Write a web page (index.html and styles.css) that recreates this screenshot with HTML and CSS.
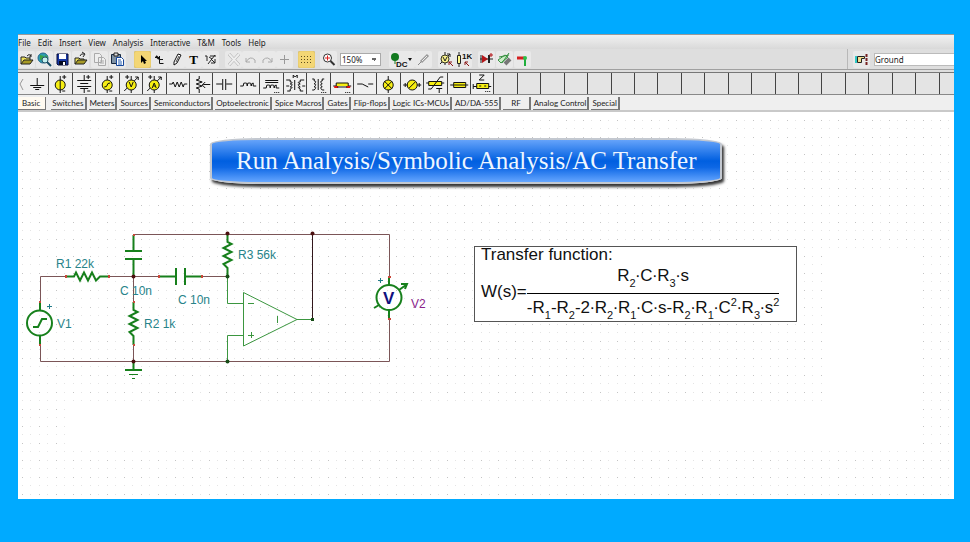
FILE: index.html
```html
<!DOCTYPE html>
<html lang="en">
<head>
<meta charset="utf-8">
<title>Schematic Editor</title>
<link rel="stylesheet" href="styles.css">
</head>
<body>
<main class="app">
  <nav class="menu" aria-label="Main menu">
    <button>File</button><button>Edit</button><button>Insert</button><button>View</button><button>Analysis</button><button>Interactive</button><button>T&amp;M</button><button>Tools</button><button>Help</button>
  </nav>

  <div class="toolbar">
    <div class="group spaced">
      <button class="tool" aria-label="Open"><svg viewBox="0 0 17 17"><path d="M3 13V6h4l1 1h4v2" fill="#eee35c" stroke="#222"/><path d="M3 13l3-4h9l-3 4z" fill="#a79a25" stroke="#222"/><path d="M9 5q2-3 4 0M13 3v3h-2" fill="none" stroke="#222"/></svg></button>
      <button class="tool" aria-label="Open from web"><svg viewBox="0 0 17 17"><circle cx="7" cy="7" r="5" fill="#2d9fae" stroke="#23668e"/><path d="M4 4l4 1-1 3-3 1zM9 4l3 2-2 3z" fill="#39a343"/><circle cx="9" cy="9" r="3" fill="#c3f0ed" stroke="#27556b"/><path d="M11 11l4 4" stroke="#174d65" stroke-width="2"/></svg></button>
      <button class="tool" aria-label="Save"><svg viewBox="0 0 17 17"><path d="M3 3h11v11H4l-1-1z" fill="#1737a4" stroke="#080d39"/><path d="M5 3h7v5H5z" fill="#fff"/><path d="M5 10h7v4H5z" fill="#050a22"/><path d="M9 11h2v3H9z" fill="#fff"/></svg></button>
      <button class="tool" aria-label="Close file"><svg viewBox="0 0 17 17"><path d="M3 13V7h4l1 1h4v2" fill="#eee35c" stroke="#222"/><path d="M3 13l3-4h9l-3 4z" fill="#a79a25" stroke="#222"/><path d="M8 5q1-3 4-2M10 1l3 2-2 3" fill="none" stroke="#222"/></svg></button>
    </div>
    <div class="group spaced">
      <button class="tool" aria-label="Copy"><svg viewBox="0 0 17 17" fill="#eee" stroke="#aaa"><path d="M3.500 2.500h5l2 2v7h-7zM7.500 6.500h5l2 2v6h-7z"/><path d="M9 10h4M9 12h4"/></svg></button>
      <button class="tool" aria-label="Paste"><svg viewBox="0 0 17 17"><path d="M2.500 3.500h9v9h-9z" fill="#7e91a4" stroke="#17283e"/><path d="M5 2h4v3H5z" fill="#ddd" stroke="#222"/><path d="M7.500 6.500h5l2 2v6h-7z" fill="#fff" stroke="#16469a"/><path d="M9 9h3M9 11h4M9 13h4" stroke="#245eb1"/></svg></button>
    </div>
    <div class="group wide">
      <button class="tool active" aria-label="Select"><svg viewBox="0 0 17 17"><path d="M7 4v8l2-2 1 3 2-1-1-2h2z" fill="#000"/></svg></button>
      <button class="tool" aria-label="Wire"><svg viewBox="0 0 17 17" fill="none" stroke="#111"><path d="M4 6.500h4M8.500 5v7.500h4M9 8.500h3"/><path d="M5 5l3 3" stroke-width="2"/></svg></button>
      <button class="tool" aria-label="Draw"><svg viewBox="0 0 17 17"><path d="M6 11l4-8 3 1-4 8-3 2z" fill="#fff" stroke="#111"/><path d="M8 11l3-6" stroke="#444"/></svg></button>
      <button class="tool letter" aria-label="Text">T</button>
      <button class="tool" aria-label="Split wire"><svg viewBox="0 0 17 17" fill="none" stroke="#222"><path d="M3 5h2v5M6 13l7-9M8 5h6M9 8l4 4M9 12h4V8M7 6l3 2"/></svg></button>
    </div>
    <div class="group mid">
      <button class="tool" aria-label="Delete"><svg viewBox="0 0 17 17"><path d="M4 3l10 11M14 3L4 14" stroke="#aaa" stroke-width="3"/><path d="M4 3l10 11M14 3L4 14" stroke="#eee" stroke-width="2"/></svg></button>
      <button class="tool" aria-label="Undo"><svg viewBox="0 0 17 17" fill="none" stroke="#aaa"><path d="M4 7v4h4M4 11q4-7 9-2v3"/></svg></button>
      <button class="tool" aria-label="Redo"><svg viewBox="0 0 17 17" fill="none" stroke="#aaa"><path d="M13 7v4H9M13 11Q9 4 4 9v3"/></svg></button>
      <button class="tool" aria-label="Add point"><svg viewBox="0 0 17 17" stroke="#999"><path d="M4 8.500h9M8.500 4v9"/></svg></button>
    </div>
    <div class="group tight">
      <button class="tool active" aria-label="Grid"><svg viewBox="0 0 17 17"><path d="M3 5.500h11M3 8.500h11M3 11.500h11" stroke="#5d4d1c" stroke-dasharray="1 2"/></svg></button>
    </div>
    <div class="group tight">
      <button class="tool" aria-label="Zoom"><svg viewBox="0 0 17 17"><circle cx="7.500" cy="7" r="4" fill="#fff" stroke="#333"/><path d="M5 7h5M7.500 4.500v5" stroke="#d22"/><path d="M10.500 10l4 4" stroke="#333" stroke-width="2"/></svg></button>
    </div>
    <select class="zoom" aria-label="Zoom level"><option>150%</option></select>
    <div class="group wide">
      <button class="tool dc" aria-label="DC analysis"><svg viewBox="0 0 26 17"><circle cx="6" cy="6" r="4" fill="#127a20"/><path d="M6 9v4" stroke="#127a20"/><text x="7" y="16" class="icon-text">DC</text><path d="M19 7h4l-2 3z" fill="#111"/></svg></button>
      <button class="tool" aria-label="Probe"><svg viewBox="0 0 17 17"><path d="M3 14l3-3" stroke="#888"/><path d="M6 11l7-7" stroke="#999" stroke-width="3"/><path d="M7 10l5-5" stroke="#eee"/></svg></button>
    </div>
    <div class="group mid">
      <button class="tool" aria-label="Add meter"><svg viewBox="0 0 17 17"><path d="M7 1v13M2 13L12 3M12 3H9M12 3v3" stroke="#222" fill="none"/><circle cx="7" cy="8" r="4" fill="#f8f18c" stroke="#332"/><path d="M5 6l2 4 2-4" stroke="#222" fill="none"/><path d="M15 15l-4-4M11 14v-3h3" stroke="#8b1717" fill="none"/></svg></button>
      <button class="tool" aria-label="Set value"><svg viewBox="0 0 17 17"><path d="M4 1v15" stroke="#222"/><path d="M2.500 4.500h3v8h-3z" fill="#fffb8a" stroke="#222"/><text x="7" y="8" class="icon-text">1K</text><path d="M14 15l-4-4M10 14v-3h3" stroke="#8b1717" fill="none"/></svg></button>
    </div>
    <div class="group spaced mid">
      <button class="tool" aria-label="Diode"><svg viewBox="0 0 17 17"><path d="M2 8h13M3 4v8" stroke="#222"/><path d="M4 4l6 4-6 4z" fill="#b51518"/><path d="M11 4v8" stroke="#222" stroke-width="2"/><path d="M13 2v4M11 4h4" stroke="#b51518"/></svg></button>
      <button class="tool" aria-label="Circuit board"><svg viewBox="0 0 17 17"><path d="M2 9l7-5 3 2-7 6zM3 6l10-2M6 12l7-10" fill="#cceec9" stroke="#399142"/><path d="M9 13l5-5" stroke="#777" stroke-width="4"/></svg></button>
      <button class="tool" aria-label="Join nodes"><svg viewBox="0 0 17 17"><path d="M3 7h7" stroke="#d52020" stroke-width="3"/><path d="M11 7v8" stroke="#20af3d" stroke-width="2"/><circle cx="11" cy="7" r="2" fill="#2ac04a"/></svg></button>
    </div>
    <div class="finder">
      <button class="tool" aria-label="Find component"><svg viewBox="0 0 17 17"><path d="M2 5h2v7H2z" fill="#30c8c6"/><path d="M4.500 5.500h7v2h-3v4h-4z" fill="#f3de8e" stroke="#222"/><path d="M13.500 3v3M13.500 7v3M13.500 11v3" stroke="#722" stroke-width="2"/></svg></button>
      <input type="text" value="Ground" aria-label="Component">
    </div>
  </div>

  <div class="palette">
    <button class="scroll" aria-label="Scroll left"><svg viewBox="0 0 8 20"><path d="M5 5L2 10l3 6" fill="none" stroke="#999"/></svg></button>
    <button aria-label="Ground"><svg viewBox="0 0 22 20"><path d="M11 4v7M4 11.500h14M7 13.500h8M9 15.500h4"/></svg></button>
    <button aria-label="Voltage source"><svg viewBox="0 0 22 20"><circle cx="11" cy="11" r="5" class="y"/><path d="M11 2v17M13 3h4M15 1v4M13 17h3"/></svg></button>
    <button aria-label="Battery"><svg viewBox="0 0 22 20"><path d="M11 1v5M4 6.500h14M7 9.500h8M4 12.500h14M7 14.500h8M11 15v4M13 3h4M15 1v4M14 17h3"/></svg></button>
    <button aria-label="Generator"><svg viewBox="0 0 22 20"><circle cx="11" cy="11" r="5" class="y"/><path d="M11 2v4M11 16v3M8 13q3 0 3-2t3-2M13 3h4M15 1v4M13 17h3"/></svg></button>
    <button aria-label="Voltmeter"><svg viewBox="0 0 22 20"><path d="M11 2v17M4 17L18 3M15 3h3v3M5 3h4M7 1v4"/><circle cx="11" cy="11" r="5" class="y"/><path d="M9 8l2 5 2-5"/></svg></button>
    <button aria-label="Ammeter"><svg viewBox="0 0 22 20"><path d="M11 2v17M4 17L18 3M15 3h3v3M5 3h4M7 1v4"/><circle cx="11" cy="11" r="5" class="y"/><path d="M9 14l2-5 2 5M10 12h2"/></svg></button>
    <button aria-label="Resistor"><svg viewBox="0 0 22 20"><path d="M2 10h3l1-2 2 5 2-5 2 5 2-5 2 5 1-3h3"/></svg></button>
    <button aria-label="Potentiometer"><svg viewBox="0 0 22 20"><path d="M9 2v3l-3 1 6 2-6 2 6 2-6 2 3 1v4M13 10.500h7M15 8l-3 3 3 3"/></svg></button>
    <button aria-label="Capacitor"><svg viewBox="0 0 22 20"><path d="M3 10h6M13 10h6M9.500 5v11M12.500 5v11"/></svg></button>
    <button aria-label="Inductor"><svg viewBox="0 0 22 20"><path d="M3 12h3q0-4 2-3 2-1 2 3 0-4 2-3 2-1 2 3 0-3 2-3v3h3"/></svg></button>
    <button aria-label="Iron core inductor"><svg viewBox="0 0 22 20"><path d="M5 6.500h13M5 8.500h13M3 14h3q0-4 2-3 2-1 2 3 0-4 2-3 2-1 2 3 0-3 2-3v3h3"/><path d="M14 18.500h6" stroke-dasharray="1 1"/></svg></button>
    <button aria-label="Coupled inductors"><svg viewBox="0 0 22 20"><path d="M2 6h4v2q4 0 0 2 4 0 0 3 4 0 0 2v2H3M20 6h-4v2q-4 0 0 2-4 0 0 3-4 0 0 2v2h3M10.500 6v10M9 4V1l2 2 2-2v3M2 12h3M18 12h3"/></svg></button>
    <button aria-label="Transformer"><svg viewBox="0 0 22 20"><path d="M5 5h2v2q3 0 0 3 3 0 0 3 3 0 0 3H5M17 5h-2v2q-3 0 0 3-3 0 0 3-3 0 0 3h2M11 5v11"/><path d="M14 18.500h6" stroke-dasharray="1 1"/></svg></button>
    <button aria-label="Fuse"><svg viewBox="0 0 22 20"><path d="M2 12h3v-3h12v3h3" class="y"/><path d="M3 13h4M15 13h4" stroke="#d11" stroke-width="2"/><path d="M6 13h10"/><path d="M14 18.500h6" stroke-dasharray="1 1"/></svg></button>
    <button aria-label="Switch"><svg viewBox="0 0 22 20"><path d="M3 10h5l6 3M14 10h5"/></svg></button>
    <button aria-label="Lamp"><svg viewBox="0 0 22 20"><path d="M11 2v17"/><circle cx="11" cy="11" r="5" class="y"/><path d="M7 7l8 8M15 7l-8 8"/></svg></button>
    <button aria-label="Motor"><svg viewBox="0 0 22 20"><path d="M2 11h18M4 9v4M18 9v4"/><circle cx="11" cy="11" r="5" class="y"/><path d="M8 14l6-6"/></svg></button>
    <button aria-label="Thermistor"><svg viewBox="0 0 22 20"><path d="M2 9h18"/><path d="M4.500 7.500h13v4h-13z" class="y"/><path d="M4 15h3L16 3h3M12 14.500h6M15 14v5"/></svg></button>
    <button aria-label="Resistor box"><svg viewBox="0 0 22 20"><path d="M2 11h18"/><path d="M5.500 8.500h12v5h-12z" class="y"/><path d="M6 11h11"/></svg></button>
    <button aria-label="Complex impedance"><svg viewBox="0 0 22 20"><path d="M2 12.500h18M8 1h5L8 6h5M2 10v5"/><path d="M5.500 9.500h12v5h-12z" class="y"/><path d="M8 12h2M13 12h2"/><path d="M14 17.500h6" stroke-dasharray="1 1"/></svg></button>
    <i></i><i></i><i></i><i></i><i></i><i></i><i></i><i></i><i></i><i></i><i></i><i></i><i></i><i></i><i></i><i></i><i></i><i></i><i></i><i></i>
  </div>

  <div class="tabs" role="tablist">
    <button role="tab" aria-selected="true" class="current">Basic</button><button role="tab">Switches</button><button role="tab">Meters</button><button role="tab">Sources</button><button role="tab">Semiconductors</button><button role="tab">Optoelectronic</button><button role="tab">Spice Macros</button><button role="tab">Gates</button><button role="tab">Flip-flops</button><button role="tab">Logic ICs-MCUs</button><button role="tab">AD/DA-555</button><button role="tab" class="short">RF</button><button role="tab">Analog Control</button><button role="tab">Special</button>
  </div>

  <section class="sheet">
    <h1 class="banner">Run Analysis/Symbolic Analysis/AC Transfer</h1>
    <div class="work">
      <svg class="schematic" viewBox="18 226 432 160" role="img" aria-label="Bridged-T active filter circuit">
        <g class="wire">
          <path d="M134 234.500H389.500V277M389.500 319V361.500H40.500V345M40.500 302V276.500H66M109 276.500H160M202 276.500H227M133.500 276V302M133.500 345V361"/>
          <path d="M312.500 234V319" class="dark"/>
        </g>
        <g class="part">
          <path d="M133.500 235V251M125 251H142M125 259H142M133.500 259V276"/>
          <path d="M66 276.500h8l2-4 4 8 4-8 4 8 4-8 4 8 4-4h9"/>
          <path d="M133.500 302v8l4 2-8 4 8 4-8 4 8 4-8 4 4 4v9"/>
          <path d="M227.500 234v8l4 2-8 4 8 4-8 4 8 4-8 4 4 4v8"/>
          <path d="M160 276.500H176M176 268V285M185 268V285M185 276.500H202"/>
          <path d="M40 302v9M40 336v9M33 327h5l4-8h5"/>
          <circle cx="39.500" cy="323" r="12.500"/>
          <path d="M389 277v8M389 310v9M374 308l5-3M399 290l7-5M401 284h6l-2 5"/>
          <circle cx="389" cy="297.500" r="12.500"/>
          <path d="M133.500 361v9M125 370H142"/><path d="M129 374.500H138M132 378.500h3" stroke-width="1"/>
        </g>
        <g class="fine">
          <path d="M227.500 276V303.500H243.500M243.500 335.500H227.500V361M297 319.500h15M243.500 292.500V346L297 319.500Z"/>
          <path d="M248 303.500h6M248 335.500h6M251.500 332v6M277.500 316v7"/>
        </g>
        <g class="plus"><path d="M47 306.500h5M49.500 304v5M378 280.500h5M380.500 278v5"/></g>
        <g class="pins"><path d="M133 234h2v2h-2zM65 275h2v3h-2zM108 275h2v3h-2zM158 275h2v3h-2zM201 275h2v3h-2zM39 301h2v2h-2zM39 344h2v2h-2zM133 301h2v2h-2zM133 344h2v2h-2zM388 276h3v2h-3zM388 318h3v2h-3z"/></g>
        <g class="nodes"><circle cx="133.500" cy="276.500" r="2"/><circle cx="133.500" cy="361.500" r="2"/><circle cx="227.500" cy="233.500" r="2"/><circle cx="312.500" cy="233.500" r="2"/></g>
        <g class="nodes green"><circle cx="227.500" cy="276.500" r="2"/><circle cx="227.500" cy="361.500" r="2"/><path d="M311 318h3v3h-3z"/></g>
        <g class="labels">
          <text x="56" y="268">R1 22k</text><text x="120" y="295">C 10n</text><text x="178" y="304">C 10n</text><text x="144" y="328">R2 1k</text><text x="238" y="259">R3 56k</text><text x="57" y="328">V1</text>
          <text x="411" y="308" class="purple">V2</text><text x="383" y="304" class="vee">V</text>
        </g>
      </svg>
      <div class="formula">
        <p>Transfer function:</p>
        <div class="equation">
          <span>W(s)=</span>
          <div class="fraction">
            <div class="top">R<sub>2</sub>∙C∙R<sub>3</sub>∙s</div>
            <div class="bottom">-R<sub>1</sub>-R<sub>2</sub>-2∙R<sub>2</sub>∙R<sub>1</sub>∙C∙s-R<sub>2</sub>∙R<sub>1</sub>∙C<sup>2</sup>∙R<sub>3</sub>∙s<sup>2</sup></div>
          </div>
        </div>
      </div>
    </div>
  </section>
</main>
</body>
</html>
```
FILE: styles.css
```css
* { box-sizing: border-box; }
body {
  margin: 0;
  min-height: 100vh;
  padding: 34px 16px 43px 18px;
  display: flex;
  background: #00aaff;
  font-family: "Noto Sans", "Open Sans", sans-serif;
  font-size: 8px;
  color: #222;
}
button {
  margin: 0;
  padding: 0;
  border: 0;
  background: none;
  font: inherit;
  color: inherit;
}
svg { display: block; }
.app {
  flex: 1;
  min-width: 0;
  display: flex;
  flex-direction: column;
  overflow: hidden;
  background: #dedede;
}
.menu {
  display: flex;
  gap: 7px;
  height: 15px;
  border-top: 1px solid #999;
  background: linear-gradient(#f1f1f1, #d9d9d9);
}
.toolbar {
  display: flex;
  align-items: center;
  height: 21px;
  border-bottom: 1px solid #a0a0a0;
}
.group { display: flex; }
.spaced { gap: 1px; }
.group + .group { margin-left: 2px; }
.group + .group.wide, .zoom + .group.wide { margin-left: 8px; }
.group + .group.mid { margin-left: 6px; }
.group + .group.tight { margin-left: 5px; }
.tool {
  width: 17px;
  height: 17px;
  flex: none;
  border-radius: 2px;
  background: #e9e9e9;
}
.tool svg { width: 100%; height: 17px; }
.tool.active { background: #f3d675; box-shadow: inset 0 0 1px #a98d35; }
.tool.letter { font: bold 13px/17px "Liberation Serif", serif; color: #000; }
.tool.dc { width: 26px; }
.icon-text { font: bold 8px "Liberation Sans", sans-serif; fill: #111; }
.zoom {
  width: 41px;
  height: 13px;
  margin-left: 3px;
  padding: 0 0 0 1px;
  border: 1px solid #aaa;
  border-radius: 0;
  appearance: none;
  background: conic-gradient(from 315deg at 50% 100%, #666 90deg, transparent 0) right 3px center / 6px 3px no-repeat #fff;
  font: inherit;
  color: inherit;
}
.finder {
  display: flex;
  align-items: center;
  gap: 4px;
  width: 107px;
  height: 20px;
  margin-left: auto;
  padding-left: 5px;
  border-left: 1px solid #b8b8b8;
}
.finder input {
  flex: 1;
  min-width: 0;
  height: 13px;
  padding: 0;
  border: 1px solid #bbb;
  border-right: 0;
  font: inherit;
  color: inherit;
  background: #fff;
}
.palette {
  display: grid;
  grid-template-columns: 8px repeat(40, 1fr);
  height: 23px;
  margin: 2px -9px 0 0;
  border-top: 1px solid #777;
  border-bottom: 1px solid #888;
  background: #e4e4e4;
}
.palette button, .palette i { border-right: 1px solid #444; min-width: 0; }
.palette button { background: #efefef; }
.palette .scroll { border-right: 0; }
.palette svg { width: 100%; height: 20px; fill: none; stroke: #111; }
.palette .y { fill: #f6ee13; }
.tabs {
  display: flex;
  align-items: flex-start;
  gap: 2px;
  height: 17px;
  padding-top: 2px;
  border-bottom: 2px solid #c9c9c9;
  background: #efefef;
  font-family: Lato, sans-serif;
}
.tabs button {
  height: 13px;
  padding: 0 1px;
  border: solid #777;
  border-width: 0 2px 1px 0;
  line-height: 12px;
  white-space: nowrap;
}
.tabs .current {
  margin-right: 3px;
  padding: 0 5px 0 4px;
  background: #fffaf0;
  border-width: 0 1px 1px 0;
}
.tabs .short { padding: 0 8px; }
.sheet {
  flex: 1;
  --strong: conic-gradient(from 270deg at 1px 1px, #c4c4c4 90deg, transparent 0);
  --soft: conic-gradient(from 270deg at 1px 1px, #e4e4e4 90deg, transparent 0);
  --blank: linear-gradient(#fff, #fff);
  background:
    var(--blank) 50px 295px / 762px 40px no-repeat,
    var(--blank) 811px 138px / 90px 197px no-repeat,
    var(--strong) 4px 8px / 17px 17px,
    var(--soft) 12px 8px / 17px 17px,
    var(--soft) 4px 16px / 17px 17px,
    var(--soft) 12px 16px / 17px 17px,
    #fff;
}
.banner {
  width: fit-content;
  margin: 26px 0 0 192px;
  padding: 0 24px;
  border: 2px solid #c3c8d0;
  border-radius: 50px / 6px;
  background: linear-gradient(#65a3fa, #005fe0 50%, #0d67e5 65%, #65a6ff);
  box-shadow: 2px 3px 3px #333;
  color: #eef6ff;
  font: 25px/42px "Liberation Serif", serif;
}
.work { display: flex; align-items: flex-start; margin-top: 42px; }
.schematic { width: 432px; height: 160px; flex: none; fill: none; }
.wire { stroke: #7b5557; }
.wire .dark { stroke: #32171c; }
.part { stroke: #17801c; stroke-width: 2; }
.fine { stroke: #3b963f; }
.plus { stroke: #237d8a; }
.pins { fill: #c9483a; }
.nodes { fill: #4b1010; }
.nodes.green { fill: #174d17; }
.labels { fill: #288389; font: 12px "Liberation Sans", sans-serif; }
.labels .purple { fill: #8a238a; }
.labels .vee { fill: #10107e; font-size: 17px; font-weight: bold; }
.formula {
  margin: 20px 0 0 24px;
  padding: 0 17px 0 6px;
  border: 1px solid #555;
  background: #fff;
  color: #111;
  font: 17px/16px "Liberation Sans", sans-serif;
}
.formula p { margin: 0; }
.equation { display: flex; align-items: center; }
.fraction { text-align: center; }
.top { height: 30px; padding-top: 5px; }
.bottom { height: 28px; padding-top: 6px; border-top: 1px solid #000; }
sub, sup { font-size: 11px; line-height: 0; }
sub { vertical-align: -6px; }
sup { vertical-align: 7px; }
```
